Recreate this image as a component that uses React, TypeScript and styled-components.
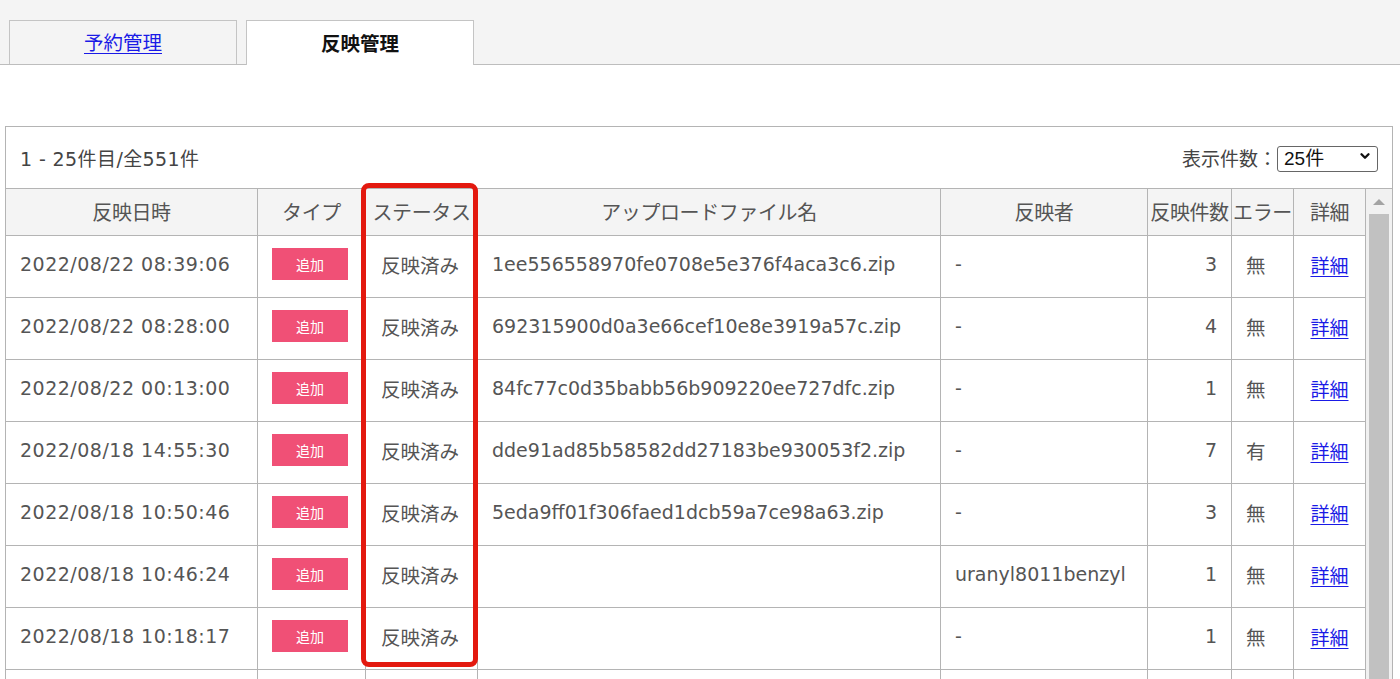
import React from "react";
import styled, { createGlobalStyle, css } from "styled-components";
import { ChevronDown } from "lucide-react";

const GlobalStyle = createGlobalStyle`
  html, body {
    margin: 0;
    padding: 0;
    background: #fff;
    overflow: hidden;
  }
  body {
    font-family: "DejaVu Sans", "Noto Sans CJK JP", sans-serif;
    color: #555;
  }
`;

const cols = "252px 108px 112px 463px 207px 84px 62px 72px";
const lineColor = "#b4b4b4";

const TabBar = styled.div`
  display: flex;
  align-items: flex-end;
  gap: 9px;
  height: 65px;
  padding-left: 9px;
  background: #f4f4f4;
  border-bottom: 1px solid #bdbdbd;
  box-sizing: border-box;
`;

const Tab = styled.div(
  ({ active }: { active?: boolean }) => css`
    width: 228px;
    box-sizing: border-box;
    display: flex;
    align-items: center;
    justify-content: center;
    padding-bottom: 2px;
    border: 1px solid #c4c4c4;
    border-bottom: none;
    margin-bottom: ${active ? "-1px" : "0"};
    height: ${active ? "45px" : "44px"};
    background: ${active ? "#fff" : "#f4f4f4"};
    font-family: "Noto Sans CJK JP", sans-serif;
    font-size: 19.5px;
    font-weight: ${active ? 700 : 400};
    color: #111;
  `
);

const TabLink = styled.a`
  color: #1a1ae6;
  text-decoration: underline;
  text-underline-offset: 3px;
`;

const Panel = styled.div`
  position: relative;
  margin: 61px 7px 0 5px;
  border: 1px solid ${lineColor};
  height: 700px;
  overflow: hidden;
`;

const Toolbar = styled.div`
  display: flex;
  align-items: center;
  justify-content: space-between;
  height: 61px;
  padding: 0 14px 0 14px;
`;

const Count = styled.span`
  font-family: "DejaVu Sans", "Noto Sans CJK JP", sans-serif;
  font-size: 19px;
  letter-spacing: 0.4px;
  color: #444;
`;

const PerPage = styled.label`
  display: flex;
  align-items: center;
  font-family: "Noto Sans CJK JP", sans-serif;
  font-size: 19px;
  color: #444;
`;

const SelectWrap = styled.span`
  position: relative;
  display: inline-block;
`;

const Select = styled.select`
  appearance: none;
  width: 101px;
  height: 26px;
  padding: 0 0 0 6px;
  border: 1px solid #666;
  border-radius: 3px;
  background: #fff;
  font-family: "Liberation Sans", "Noto Sans CJK JP", sans-serif;
  font-size: 19px;
  color: #111;
`;

const SelectArrow = styled(ChevronDown)`
  position: absolute;
  right: 6px;
  top: 6px;
  pointer-events: none;
`;

const TableArea = styled.div`
  display: flex;
  border-top: 1px solid ${lineColor};
`;

const Grid = styled.div`
  display: flex;
  flex-direction: column;
  width: 1360px;
`;

const Row = styled.div(
  ({ head }: { head?: boolean }) => css`
    display: grid;
    grid-template-columns: ${cols};
    height: ${head ? "47px" : "62px"};
    background: ${head ? "#f4f4f4" : "#fff"};
  `
);

type Align = "left" | "center" | "right";

const Cell = styled.div(
  ({ align = "left", tight, head }: { align?: Align; tight?: boolean; head?: boolean }) => css`
    box-sizing: border-box;
    display: flex;
    align-items: center;
    justify-content: ${align === "left" ? "flex-start" : align === "right" ? "flex-end" : "center"};
    padding: 0 ${tight ? "0" : "14px"} ${head ? "1px" : "5px"};
    border-right: 1px solid ${lineColor};
    border-bottom: 1px solid ${lineColor};
    color: #555;
    white-space: nowrap;
    overflow: hidden;
  `
);

const HeadText = styled.span`
  font-family: "Noto Sans CJK JP", sans-serif;
  font-size: 20px;
  color: #555;
  letter-spacing: -0.4px;
`;

const Latin = styled.span(
  ({ wide }: { wide?: boolean }) => css`
    font-family: "DejaVu Sans", "Noto Sans CJK JP", sans-serif;
    font-size: 19px;
    letter-spacing: ${wide ? "0.5px" : "0"};
  `
);

const Jp = styled.span`
  font-family: "Noto Sans CJK JP", sans-serif;
  font-size: 19.5px;
  margin-right: 3px;
`;

const Badge = styled.span`
  display: inline-flex;
  align-items: center;
  justify-content: center;
  width: 76px;
  height: 32px;
  margin-right: 3px;
  background: #f05076;
  color: #fff;
  font-family: "Noto Sans CJK JP", sans-serif;
  font-size: 14px;
`;

const DetailLink = styled.a`
  font-family: "Noto Sans CJK JP", sans-serif;
  font-size: 19px;
  color: #1a1ae6;
  text-decoration: underline;
  text-underline-offset: 3px;
`;

const Scrollbar = styled.div`
  flex: 1;
  display: flex;
  flex-direction: column;
  align-items: center;
  background: #f1f1f1;
  padding-top: 10px;
`;

const ScrollArrow = styled.div`
  width: 0;
  height: 0;
  border-left: 6px solid transparent;
  border-right: 6px solid transparent;
  border-bottom: 6px solid #a3a3a3;
  margin-bottom: 9px;
`;

const ScrollThumb = styled.div`
  width: 20px;
  height: 600px;
  background: #c1c1c1;
`;

const Highlight = styled.div`
  position: absolute;
  left: 355px;
  top: 56px;
  width: 117px;
  height: 484px;
  box-sizing: border-box;
  border: 5px solid #e3190f;
  border-radius: 8px;
  pointer-events: none;
`;

type Item = {
  date: string;
  file: string;
  author: string;
  count: number;
  error: string;
};

const rows: Item[] = [
  { date: "2022/08/22 08:39:06", file: "1ee556558970fe0708e5e376f4aca3c6.zip", author: "-", count: 3, error: "無" },
  { date: "2022/08/22 08:28:00", file: "692315900d0a3e66cef10e8e3919a57c.zip", author: "-", count: 4, error: "無" },
  { date: "2022/08/22 00:13:00", file: "84fc77c0d35babb56b909220ee727dfc.zip", author: "-", count: 1, error: "無" },
  { date: "2022/08/18 14:55:30", file: "dde91ad85b58582dd27183be930053f2.zip", author: "-", count: 7, error: "有" },
  { date: "2022/08/18 10:50:46", file: "5eda9ff01f306faed1dcb59a7ce98a63.zip", author: "-", count: 3, error: "無" },
  { date: "2022/08/18 10:46:24", file: "", author: "uranyl8011benzyl", count: 1, error: "無" },
  { date: "2022/08/18 10:18:17", file: "", author: "-", count: 1, error: "無" },
];

export default function App() {
  return (
    <>
      <GlobalStyle />
      <TabBar>
        <Tab>
          <TabLink href="#">予約管理</TabLink>
        </Tab>
        <Tab active>反映管理</Tab>
      </TabBar>

      <Panel>
        <Toolbar>
          <Count>1 - 25件目/全551件</Count>
          <PerPage>
            表示件数：
            <SelectWrap>
              <Select defaultValue="25">
                <option value="25">25件</option>
                <option value="50">50件</option>
                <option value="100">100件</option>
              </Select>
              <SelectArrow size={14} strokeWidth={4} color="#111" />
            </SelectWrap>
          </PerPage>
        </Toolbar>

        <TableArea>
          <Grid>
            <Row head>
              <Cell head align="center"><HeadText>反映日時</HeadText></Cell>
              <Cell head align="center"><HeadText>タイプ</HeadText></Cell>
              <Cell head align="center" tight><HeadText>ステータス</HeadText></Cell>
              <Cell head align="center"><HeadText>アップロードファイル名</HeadText></Cell>
              <Cell head align="center"><HeadText>反映者</HeadText></Cell>
              <Cell head align="center" tight><HeadText>反映件数</HeadText></Cell>
              <Cell head align="center" tight><HeadText>エラー</HeadText></Cell>
              <Cell head align="center"><HeadText>詳細</HeadText></Cell>
            </Row>
            {rows.map((r) => (
              <Row key={r.date}>
                <Cell><Latin wide>{r.date}</Latin></Cell>
                <Cell align="center"><Badge>追加</Badge></Cell>
                <Cell align="center" tight><Jp>反映済み</Jp></Cell>
                <Cell><Latin>{r.file}</Latin></Cell>
                <Cell><Latin>{r.author}</Latin></Cell>
                <Cell align="right"><Latin>{r.count}</Latin></Cell>
                <Cell><Jp>{r.error}</Jp></Cell>
                <Cell align="center"><DetailLink href="#">詳細</DetailLink></Cell>
              </Row>
            ))}
            {/* next row starts just above the fold; its contents are off-screen */}
            <Row>
              {Array.from({ length: 8 }, (_, i) => (
                <Cell key={i} />
              ))}
            </Row>
          </Grid>
          <Scrollbar>
            <ScrollArrow />
            <ScrollThumb />
          </Scrollbar>
        </TableArea>

        <Highlight />
      </Panel>
    </>
  );
}
